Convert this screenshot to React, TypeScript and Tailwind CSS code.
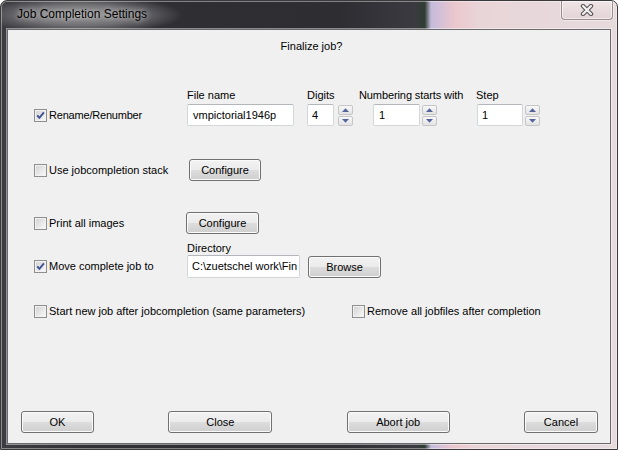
import React from "react";

function CheckBox({ checked }: { checked?: boolean }) {
  return (
    <span className="w-[13px] h-[13px] shrink-0 border border-[#8e8f8f] [background-image:linear-gradient(135deg,#d0d0d0_0%,#e6e6e6_50%,#fbfbfb_100%)] shadow-[inset_0_0_0_1px_#f2f2f2] flex items-center justify-center">
      {checked && (
        <svg width="11" height="11" viewBox="0 0 11 11">
          <path d="M2.2 5.4 L4.4 7.9 L8.9 2.4" fill="none" stroke="#3d5196" strokeWidth="1.9" />
        </svg>
      )}
    </span>
  );
}

function Btn({ className, children }: { className: string; children: React.ReactNode }) {
  return (
    <div
      className={
        "h-[22px] rounded-[3px] border border-[#707070] [background-image:linear-gradient(#f2f2f2_0%,#ebebeb_50%,#dddddd_50%,#cfcfcf_100%)] shadow-[inset_0_0_0_1px_#fbfbfb] flex items-center justify-center text-black " +
        className
      }
    >
      {children}
    </div>
  );
}

function Field({ className, children }: { className: string; children?: React.ReactNode }) {
  return (
    <div
      className={
        "bg-white border border-[#d3d6db] border-t-[#b3b6bb] rounded-[2px] flex items-center pl-[4px] overflow-hidden whitespace-nowrap " +
        className
      }
    >
      {children}
    </div>
  );
}

function Spin() {
  return (
    <div className="flex flex-col gap-[1px] w-[15px] pt-[1px]">
      <div className="h-[10px] border border-[#c6c6c6] rounded-[2px] [background-image:linear-gradient(#f8f8f8,#e3e3e3)] flex items-center justify-center">
        <svg width="7" height="4" viewBox="0 0 7 4">
          <path d="M0 4 L3.5 0.3 L7 4 Z" fill="#53649a" />
        </svg>
      </div>
      <div className="h-[10px] border border-[#c6c6c6] rounded-[2px] [background-image:linear-gradient(#f8f8f8,#e3e3e3)] flex items-center justify-center">
        <svg width="7" height="4" viewBox="0 0 7 4">
          <path d="M0 0 L3.5 3.7 L7 0 Z" fill="#53649a" />
        </svg>
      </div>
    </div>
  );
}

export default function App() {
  return (
    <div className="w-[618px] h-[450px] flex flex-col rounded-t-[7px] overflow-hidden border border-[#3a3a3d] shadow-[inset_0_0_0_1px_rgba(255,255,255,0.4)] [background-image:radial-gradient(ellipse_100px_19px_at_82px_14px,rgba(255,255,255,0.5),rgba(255,255,255,0.3)_55%,rgba(255,255,255,0)),linear-gradient(90deg,#3d3c41_0%,#302f34_15%,#2e2d32_55%,#3b3a40_67.2%,#2f3d33_68.8%,#c4bbdc_69.8%,#ebc7cd_73.6%,#e8d5d8_77.7%,#e6dadd_100%)] font-['Liberation_Sans',Arial,sans-serif] text-[11px] leading-[13px] text-black">
      {/* title bar */}
      <div className="h-[28px] flex-none flex justify-between items-start pl-[16px] pr-[4px]">
        <span className="mt-[6px] text-[12px] leading-[15px] text-black [text-shadow:0_0_5px_rgba(255,255,255,0.6),0_0_10px_rgba(255,255,255,0.4)]">
          Job Completion Settings
        </span>
        <div className="w-[52px] h-[19px] rounded-b-[4px] border border-t-0 border-[#9b8c90] [background-image:linear-gradient(#efe5e7,#e3d3d6)] shadow-[inset_0_0_0_1px_rgba(255,255,255,0.55),0_0_0_1px_rgba(255,255,255,0.45)] flex items-center justify-center">
          <svg width="14" height="12" viewBox="0 0 14 12">
            <path d="M3 2 L11 10 M11 2 L3 10" stroke="#5a5458" strokeWidth="4.4" strokeLinecap="round" />
            <path d="M3 2 L11 10 M11 2 L3 10" stroke="#f6f3f4" strokeWidth="2.2" strokeLinecap="round" />
          </svg>
        </div>
      </div>

      {/* client area */}
      <div className="flex-none h-[415px] mx-[6px] border border-[#6b6b6f] shadow-[0_0_0_1px_rgba(255,255,255,0.45)] bg-[#f0f0f0] flex flex-col">
        <div className="pt-[10px] text-center pl-[5px]">Finalize job?</div>

        {/* row 1 */}
        <div className="mt-[36px] flex items-end pl-[26px]">
          <div className="w-[153px] h-[22px] flex items-center gap-[2px]">
            <CheckBox checked />
            <span className="tracking-[-0.2px]">Rename/Renumber</span>
          </div>
          <div className="w-[120px] flex flex-col">
            <span className="mb-[2px]">File name</span>
            <Field className="w-[107px] h-[22px] pl-[5px]">vmpictorial1946p</Field>
          </div>
          <div className="w-[52px] flex flex-col">
            <span className="mb-[2px]">Digits</span>
            <div className="flex gap-[4px]">
              <Field className="w-[27px] h-[22px]">4</Field>
              <Spin />
            </div>
          </div>
          <div className="w-[117px] flex flex-col">
            <span className="mb-[2px] tracking-[-0.1px]">Numbering starts with</span>
            <div className="flex gap-[2px] pl-[14px]">
              <Field className="w-[47px] h-[22px] pl-[5px]">1</Field>
              <Spin />
            </div>
          </div>
          <div className="flex flex-col">
            <span className="mb-[2px]">Step</span>
            <div className="flex gap-[2px] pl-[1px]">
              <Field className="w-[46px] h-[22px]">1</Field>
              <Spin />
            </div>
          </div>
        </div>

        {/* row 2 */}
        <div className="mt-[33px] flex items-center pl-[26px]">
          <div className="w-[155px] flex items-center gap-[2px]">
            <CheckBox />
            <span>Use jobcompletion stack</span>
          </div>
          <Btn className="w-[72px]">Configure</Btn>
        </div>

        {/* row 3 */}
        <div className="mt-[31px] flex items-center pl-[26px]">
          <div className="w-[152px] flex items-center gap-[2px]">
            <CheckBox />
            <span>Print all images</span>
          </div>
          <Btn className="w-[73px]">Configure</Btn>
        </div>

        {/* row 4 */}
        <div className="mt-[8px] flex items-end pl-[26px]">
          <div className="w-[153px] h-[23px] flex items-center gap-[2px]">
            <CheckBox checked />
            <span>Move complete job to</span>
          </div>
          <div className="flex flex-col">
            <span>Directory</span>
            <Field className="w-[113px] h-[23px]">C:\zuetschel work\Fin</Field>
          </div>
          <Btn className="w-[73px] ml-[8px]">Browse</Btn>
        </div>

        {/* row 5 */}
        <div className="mt-[27px] flex items-center pl-[26px]">
          <div className="w-[318px] flex items-center gap-[2px]">
            <CheckBox />
            <span>Start new job after jobcompletion (same parameters)</span>
          </div>
          <div className="flex items-center gap-[2px]">
            <CheckBox />
            <span>Remove all jobfiles after completion</span>
          </div>
        </div>

        {/* buttons */}
        <div className="mt-auto flex justify-between pl-[13px] pr-[12px] pb-[10px]">
          <Btn className="w-[73px]">OK</Btn>
          <Btn className="w-[104px]">Close</Btn>
          <Btn className="w-[103px]">Abort job</Btn>
          <Btn className="w-[74px]">Cancel</Btn>
        </div>
      </div>
    </div>
  );
}
